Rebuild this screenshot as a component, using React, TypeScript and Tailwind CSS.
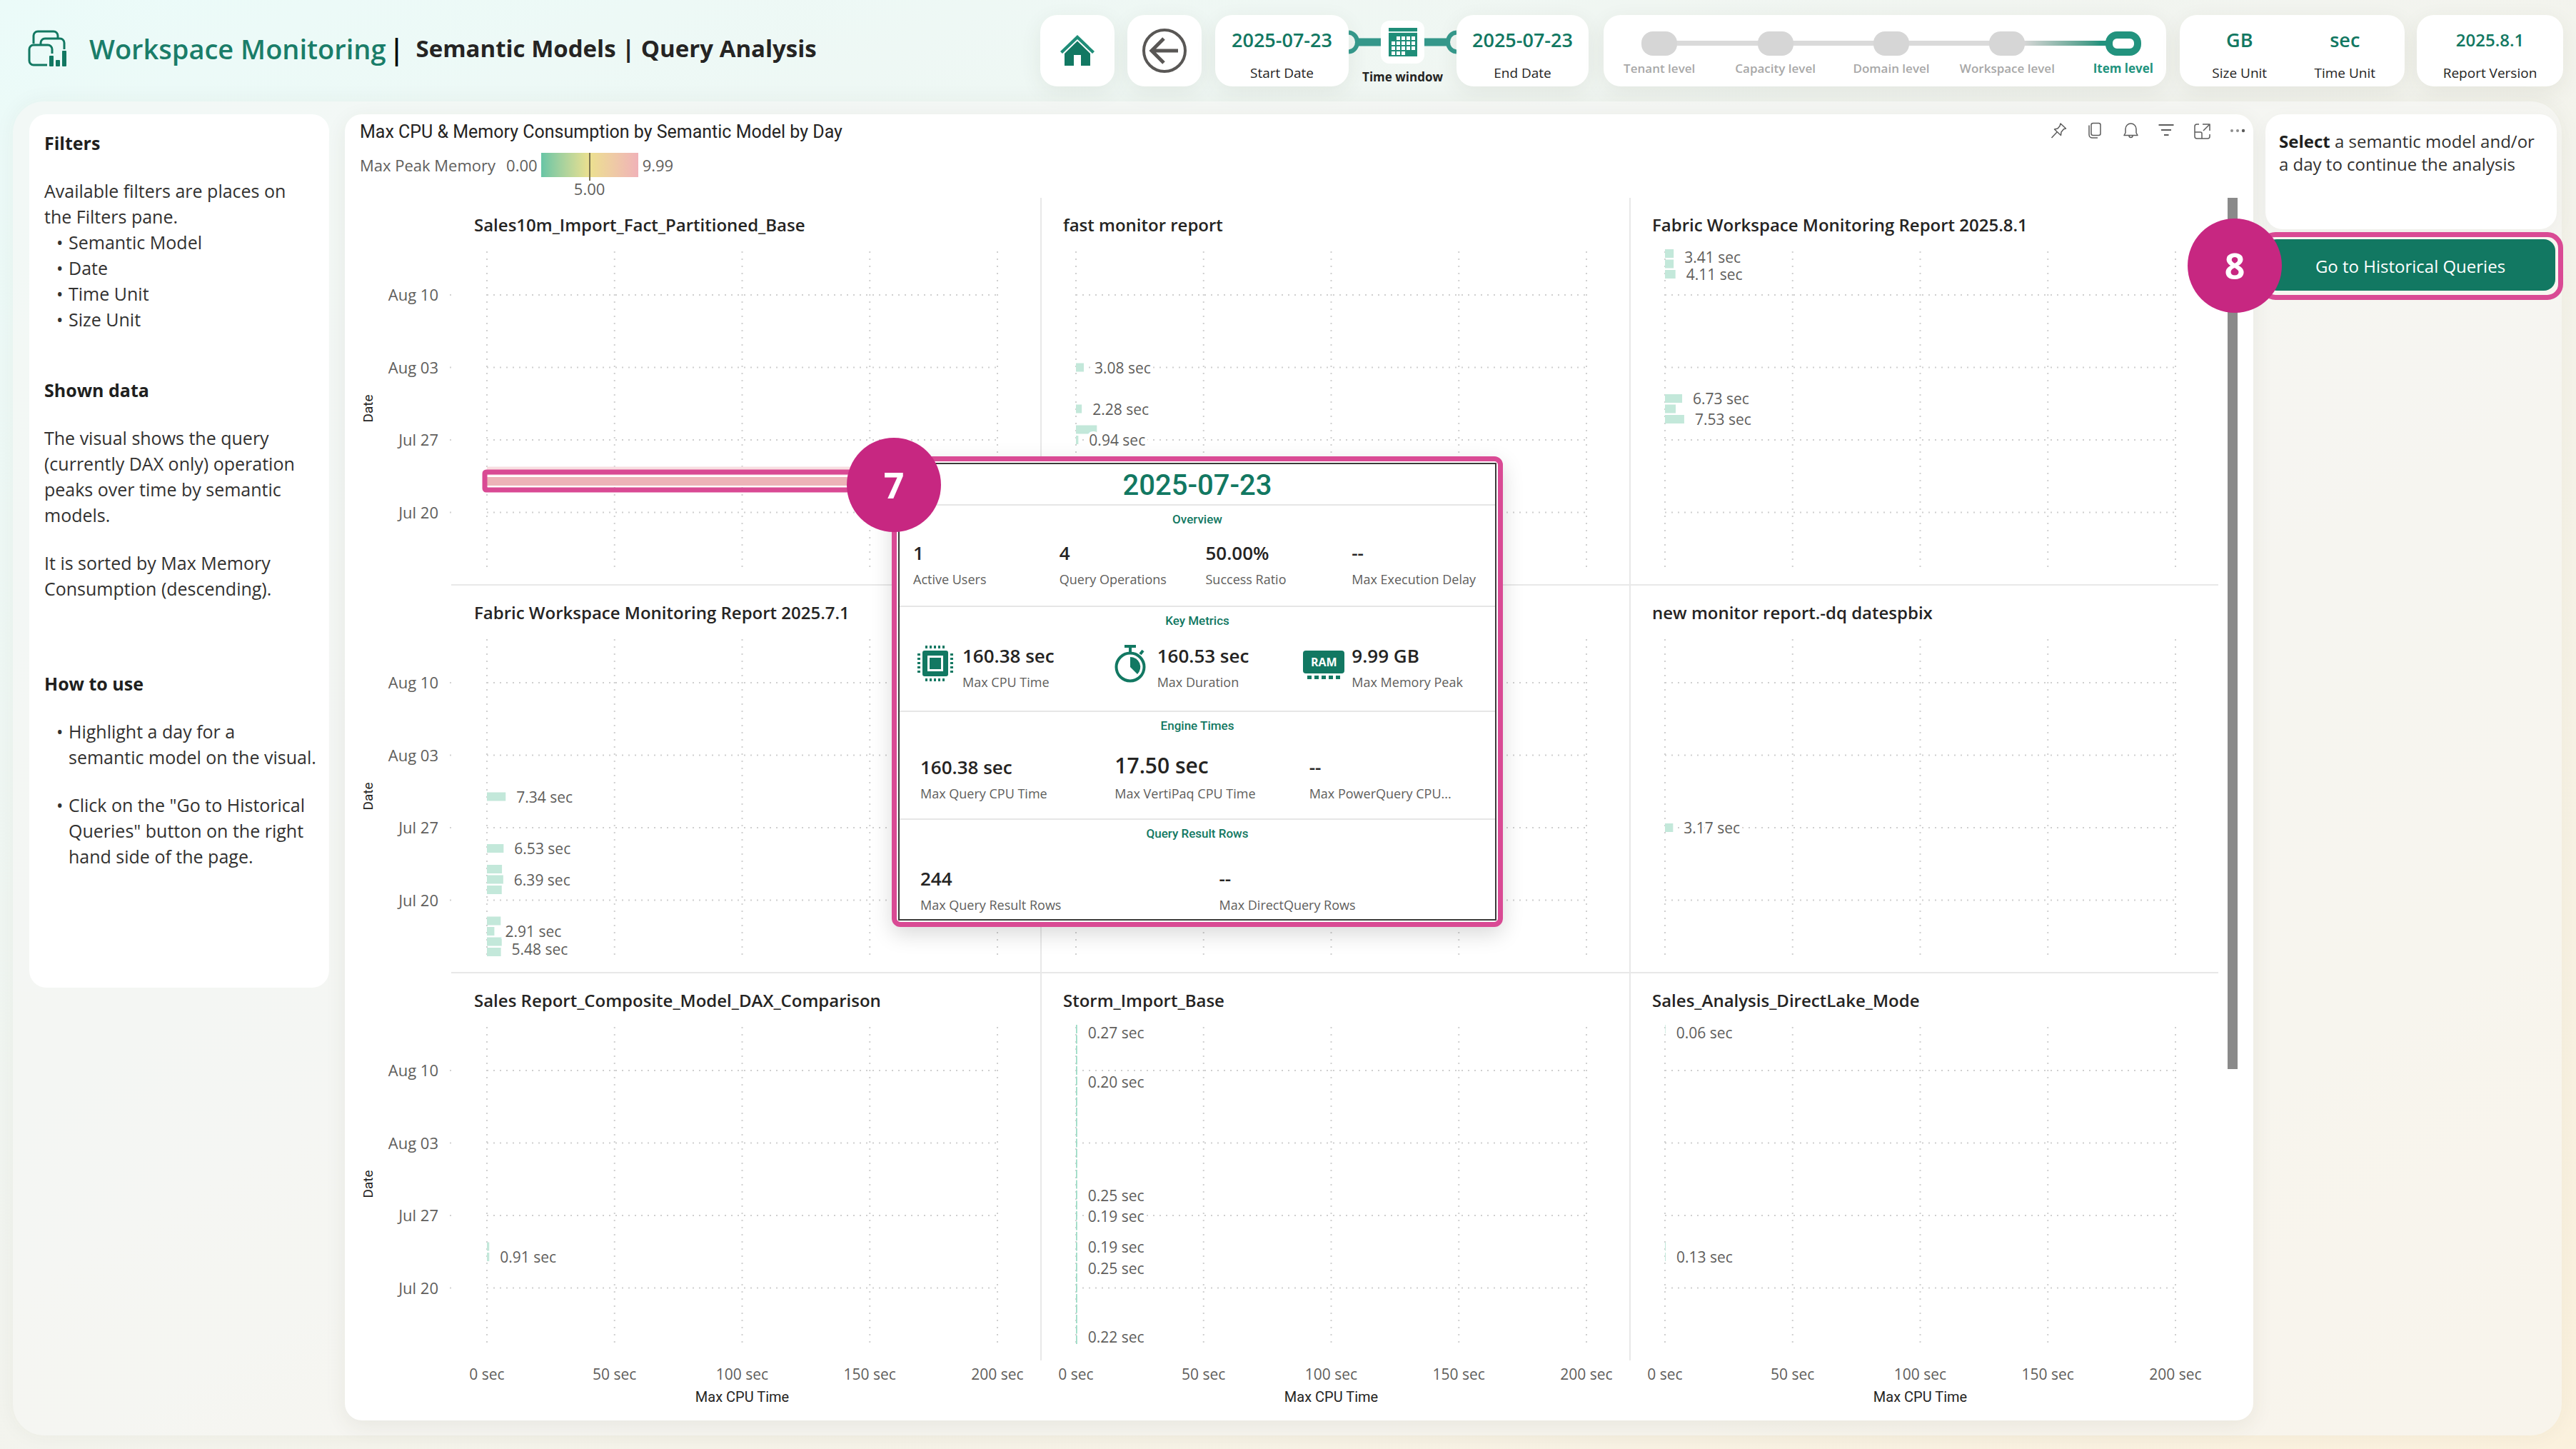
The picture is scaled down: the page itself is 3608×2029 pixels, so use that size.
import type { ReactNode } from "react";

const TEAL = "#127862";

/* ---------- icons ---------- */

function LogoIcon() {
  return (
    <svg className="h-[56px] w-[58px]" viewBox="0 0 58 56" fill="none" stroke={TEAL} strokeWidth="3" aria-hidden="true">
      <path d="M8 20V9a6 6 0 0 1 6-6h22a6 6 0 0 1 6 6v4" />
      <path d="M18 21v-2a6 6 0 0 1 6-6h21a6 6 0 0 1 6 6v9" />
      <path d="M27 50H8a6 6 0 0 1-6-6V28a6 6 0 0 1 6-6h20a6 6 0 0 1 6 6v6" />
      <g fill={TEAL} stroke="none">
        <rect x="30" y="37" width="6" height="15" rx="1" />
        <rect x="39" y="43" width="6" height="9" rx="1" />
        <rect x="48" y="30" width="6" height="22" rx="1" />
      </g>
    </svg>
  );
}

function HomeIcon() {
  return (
    <svg className="h-[44px] w-[50px]" viewBox="0 0 50 44" aria-hidden="true">
      <path d="M25 0 L1 23 L4 26 L25 6 L46 26 L49 23 Z" fill="#1f8d78" />
      <path d="M25 8.500 L7 26 V43 H20 V28 H30 V43 H43 V26 Z" fill={TEAL} />
    </svg>
  );
}

function BackIcon() {
  return (
    <svg className="h-[64px] w-[64px]" viewBox="0 0 64 64" fill="none" stroke="#595755" strokeWidth="4" aria-hidden="true">
      <circle cx="32" cy="32" r="29" />
      <path d="M51 32H15M31 15L14 32l17 17" strokeWidth="5" />
    </svg>
  );
}

function CalendarIcon() {
  const cells: ReactNode[] = [];
  for (let r = 0; r < 4; r++) {
    for (let c = 0; c < 5; c++) {
      if ((r === 0 && c === 0) || (r === 3 && c > 2)) continue;
      cells.push(<rect key={`${r}-${c}`} x={4 + c * 7} y={12 + r * 7} width="5" height="5" fill="#fff" />);
    }
  }
  return (
    <svg className="h-[40px] w-[40px]" viewBox="0 0 40 40" aria-hidden="true">
      <rect width="40" height="40" fill="#1f8d78" />
      <path d="M0 6h40" stroke="#e7f4f1" strokeWidth="2" />
      {cells}
    </svg>
  );
}

function CpuIcon() {
  return (
    <svg className="h-[50px] w-[50px]" viewBox="0 0 50 50" fill={TEAL} aria-hidden="true">
      <rect x="7" y="7" width="36" height="36" rx="3" />
      <rect x="14" y="14" width="22" height="22" fill="#fff" />
      <rect x="17" y="17" width="16" height="16" />
      <g stroke={TEAL} strokeWidth="4" strokeDasharray="3 3">
        <path d="M11 2h30M11 48h30M2 11v30M48 11v30" />
      </g>
    </svg>
  );
}

function StopwatchIcon() {
  return (
    <svg className="h-[54px] w-[46px]" viewBox="0 0 46 54" fill="none" stroke={TEAL} strokeWidth="4" aria-hidden="true">
      <circle cx="23" cy="32" r="19.500" />
      <path d="M15 3h16M23 3v9M37 14l4-5" />
      <path d="M23 18a14 14 0 0 1 10 24L23 32z" fill={TEAL} stroke="none" />
    </svg>
  );
}

function RamIcon() {
  return (
    <div className="flex w-[58px] flex-col items-center" aria-hidden="true">
      <div className="flex h-8 w-full items-center justify-center rounded bg-[#127862] text-[16px] font-bold text-white">RAM</div>
      <svg className="mt-[3px] h-[5px] w-[46px]" viewBox="0 0 46 5">
        <path d="M0 2.500h46" stroke={TEAL} strokeWidth="5" strokeDasharray="6 4" />
      </svg>
    </div>
  );
}

const toolIcons: { name: string; art: ReactNode }[] = [
  { name: "Pin visual", art: <path d="M14 2l7.500 7-3 .8-3.500 4.200-.5 4.500L5.500 10l4.500-1 3-3.500zM9 14l-7.500 8" /> },
  {
    name: "Copy visual",
    art: (
      <>
        <rect x="7" y="1.500" width="13" height="17" rx="2.500" />
        <path d="M4 4.500v13a4.500 4.500 0 0 0 4.500 4.500H16" />
      </>
    ),
  },
  {
    name: "Set alert",
    art: (
      <>
        <path d="M3 18.500h19l-2-3.500V9.500a7.500 7.500 0 0 0-15 0V15z" />
        <path d="M10 19a2.500 2.500 0 0 0 5 0" />
      </>
    ),
  },
  { name: "Filters on visual", art: <path d="M1.500 4h21M5 11h14M9 18h6.500" strokeWidth="2" /> },
  {
    name: "Focus mode",
    art: (
      <>
        <path d="M8 3H5a3 3 0 0 0-3 3v14a3 3 0 0 0 3 3h15a3 3 0 0 0 3-3v-3M13 3h10v9M22 4l-8 8" />
        <path d="M2 14h8a2 2 0 0 1 2 2v7" />
      </>
    ),
  },
  {
    name: "More options",
    art: (
      <g fill="#5c5c5c" stroke="none">
        <circle cx="4" cy="12" r="2" opacity=".7" />
        <circle cx="12" cy="12" r="2" opacity=".7" />
        <circle cx="20" cy="12" r="2.200" />
      </g>
    ),
  },
];

/* ---------- header ---------- */

const cardClass = "rounded-3xl bg-white shadow-[0_8px_30px_rgba(60,60,40,0.08)]";

function HeaderStat({ value, label, size }: { value: string; label: string; size: string }) {
  return (
    <div className="flex flex-1 flex-col items-center">
      <span className={`${size} mt-[15px] h-10 leading-10 font-semibold text-[#127862]`}>{value}</span>
      <span className="mt-3 text-[19px] leading-7 text-[#252423]">{label}</span>
    </div>
  );
}

function Connector({ flip }: { flip?: boolean }) {
  return (
    <svg className={flip ? "h-[40px] w-[45px] -scale-x-100" : "h-[40px] w-[45px]"} viewBox="0 0 45 40" fill="none" stroke="#35978a" aria-hidden="true">
      <path d="M0 6.500C8 7 12 14 12 20S8 33 0 33.500" strokeWidth="6" />
      <path d="M13 20h32" strokeWidth="11" />
    </svg>
  );
}

const levels = ["Tenant level", "Capacity level", "Domain level", "Workspace level", "Item level"];

function Levels() {
  return (
    <nav className={`${cardClass} h-[100px] w-[788px]`} aria-label="Levels">
      <ol className="-mr-[21px] -ml-[3px] grid grid-cols-5 pt-[23px]">
        {levels.map((name, i) => {
          const active = i === levels.length - 1;
          return (
            <li key={name} className="relative flex flex-col items-center">
              {i < 3 && <div className="absolute top-[13px] left-1/2 h-[7px] w-full bg-[#dadada]" />}
              {i === 3 && <div className="absolute top-[13px] left-1/2 z-10 h-[7px] w-full bg-linear-to-r from-[#d6d6d6] from-15% to-[#22937e] to-80%" />}
              {active ? (
                <div className="z-20 h-[34px] w-[50px] rounded-2xl border-[10px] border-[#22937e] bg-white" />
              ) : (
                <div className="z-0 h-[34px] w-[50px] rounded-2xl bg-[#d6d6d6]" />
              )}
              <span className={active ? "mt-1 text-[17px] leading-7 font-bold whitespace-nowrap text-[#22937e]" : "mt-1 text-[17px] leading-7 font-semibold whitespace-nowrap text-[#a8a8a8]"}>
                {name}
              </span>
            </li>
          );
        })}
      </ol>
    </nav>
  );
}

function Header() {
  return (
    <header className="flex h-[142px] items-start pt-[21px] pr-[18px] pl-[39px]">
      <div className="flex items-start pt-[17px]">
        <div className="pt-[3px]">
          <LogoIcon />
        </div>
        <h1 className="ml-[28px] text-[38px] leading-[60px] font-semibold whitespace-nowrap text-[#1a7d69]">Workspace Monitoring</h1>
        <span className="ml-1 text-[40px] leading-[60px] font-semibold text-black">|</span>
        <h2 className="ml-4 text-[33px] leading-[60px] font-bold whitespace-nowrap text-[#252423]">Semantic Models | Query Analysis</h2>
      </div>
      <div className="ml-auto flex items-start">
        <button aria-label="Home" className={`${cardClass} flex h-[100px] w-[104px] items-center justify-center`}>
          <HomeIcon />
        </button>
        <button aria-label="Back" className={`${cardClass} ml-[18px] flex h-[100px] w-[104px] items-center justify-center`}>
          <BackIcon />
        </button>
        <div className={`${cardClass} ml-[19px] flex h-[100px] w-[187px]`}>
          <HeaderStat value="2025-07-23" label="Start Date" size="text-[27px]" />
        </div>
        <div className="flex w-[151px] flex-col items-center pt-2">
          <div className="flex items-center">
            <Connector />
            <div className="flex h-[60px] w-[61px] items-center justify-center rounded-xl bg-white">
              <CalendarIcon />
            </div>
            <Connector flip />
          </div>
          <span className="mt-[5px] text-[17px] leading-7 font-bold whitespace-nowrap text-[#252423]">Time window</span>
        </div>
        <div className={`${cardClass} flex h-[100px] w-[185px]`}>
          <HeaderStat value="2025-07-23" label="End Date" size="text-[27px]" />
        </div>
        <div className="ml-[21px]">
          <Levels />
        </div>
        <div className={`${cardClass} ml-[19px] flex h-[100px] w-[315px] px-[10px]`}>
          <HeaderStat value="GB" label="Size Unit" size="text-[27px]" />
          <HeaderStat value="sec" label="Time Unit" size="text-[27px]" />
        </div>
        <div className={`${cardClass} ml-[17px] flex h-[100px] w-[205px]`}>
          <HeaderStat value="2025.8.1" label="Report Version" size="text-[24px]" />
        </div>
      </div>
    </header>
  );
}

/* ---------- side columns ---------- */

function Bullets({ items, gap }: { items: string[]; gap?: boolean }) {
  return (
    <ul className={gap ? "mt-[31px] flex flex-col gap-[31px]" : "flex flex-col"}>
      {items.map((t) => (
        <li key={t} className="flex pl-[17px]">
          <span className="w-[17px] shrink-0">•</span>
          <span className="whitespace-pre">{t}</span>
        </li>
      ))}
    </ul>
  );
}

function Sidebar() {
  return (
    <aside className="h-[1223px] w-[420px] shrink-0 rounded-3xl bg-white pt-[22px] pr-3 pl-[21px] text-[25px] leading-9 text-[#323130]">
      <h3 className="font-bold text-[#201f1e]">Filters</h3>
      <p className="mt-[31px]">
        Available filters are places on
        <br />
        the Filters pane.
      </p>
      <Bullets items={["Semantic Model", "Date", "Time Unit", "Size Unit"]} />
      <h3 className="mt-[63px] font-bold text-[#201f1e]">Shown data</h3>
      <p className="mt-[31px]">
        The visual shows the query
        <br />
        (currently DAX only) operation
        <br />
        peaks over time by semantic
        <br />
        models.
      </p>
      <p className="mt-[31px]">
        It is sorted by Max Memory
        <br />
        Consumption (descending).
      </p>
      <h3 className="mt-[97px] font-bold text-[#201f1e]">How to use</h3>
      <Bullets
        gap
        items={["Highlight a day for a\nsemantic model on the visual.", 'Click on the "Go to Historical\nQueries" button on the right\nhand side of the page.']}
      />
    </aside>
  );
}

function Badge({ children, place }: { children: ReactNode; place: string }) {
  return (
    <div className={`${place} absolute z-30 flex h-[132px] w-[132px] items-center justify-center rounded-full bg-[#c72781] text-[50px] font-bold text-white`}>
      {children}
    </div>
  );
}

function ActionColumn() {
  return (
    <aside className="w-[408px] shrink-0">
      <p className="h-[161px] rounded-3xl bg-white pt-[22px] pl-[19px] text-[24px] leading-8 text-[#323130] shadow-[0_8px_30px_rgba(60,60,40,0.04)]">
        <b className="text-[#201f1e]">Select</b> a semantic model and/or
        <br />a day to continue the analysis
      </p>
      <div className="relative mt-[14px]">
        <div className="absolute -top-[10px] -right-[9px] -bottom-[13px] -left-2 rounded-[22px] border-[7px] border-[#d94a94] bg-[#f7f6f0]" />
        <button className="relative h-[72px] w-[406px] rounded-2xl bg-[#127862] pt-1 text-[24px] text-white">Go to Historical Queries</button>
        <Badge place="-left-[109px] -top-[29px]">8</Badge>
      </div>
    </aside>
  );
}

/* ---------- small multiples ---------- */

type Bar = { day: number; sec: number; label?: string; labelY?: number; fill?: string };
type FacetData = { title: string; bars: Bar[]; highlight?: boolean };

/* Days count from Jul 27, which sits 265px below the top of a plot. */
const dayY = (day: number) => 265 - day * 14.5;
const ticks = [
  { day: 14, text: "Aug 10" },
  { day: 7, text: "Aug 03" },
  { day: 0, text: "Jul 27" },
  { day: -7, text: "Jul 20" },
];

const stormLabels: Record<number, [string, number]> = {
  17: ["0.27 sec", 9],
  13: ["0.20 sec", 78],
  2: ["0.25 sec", 237],
  0: ["0.19 sec", 266],
  [-3]: ["0.19 sec", 309],
  [-5]: ["0.25 sec", 339],
  [-12]: ["0.22 sec", 435],
};
const stormBars: Bar[] = Array.from({ length: 31 }, (_, i) => {
  const day = 18 - i;
  const l = stormLabels[day];
  return { day, sec: 0.5, label: l?.[0], labelY: l?.[1], fill: "#9ddcc6" };
});

const facets: FacetData[] = [
  {
    title: "Sales10m_Import_Fact_Partitioned_Base",
    highlight: true,
    bars: [
      { day: -3, sec: 158, fill: "#f8dfe1" },
      { day: -4, sec: 160.38, fill: "#edb3b8" },
    ],
  },
  {
    title: "fast monitor report",
    bars: [
      { day: 7, sec: 3.08, label: "3.08 sec" },
      { day: 3, sec: 2.28, label: "2.28 sec" },
      { day: 1, sec: 8.2 },
      { day: 0, sec: 0.94, label: "0.94 sec" },
    ],
  },
  {
    title: "Fabric Workspace Monitoring Report 2025.8.1",
    bars: [
      { day: 18, sec: 3.41, label: "3.41 sec", labelY: 9 },
      { day: 17, sec: 3.4 },
      { day: 16, sec: 4.11, label: "4.11 sec" },
      { day: 4, sec: 6.73, label: "6.73 sec" },
      { day: 3, sec: 4.2 },
      { day: 2, sec: 7.53, label: "7.53 sec" },
    ],
  },
  {
    title: "Fabric Workspace Monitoring Report 2025.7.1",
    bars: [
      { day: 3, sec: 7.34, label: "7.34 sec" },
      { day: -2, sec: 6.53, label: "6.53 sec" },
      { day: -4, sec: 5.9 },
      { day: -5, sec: 6.39, label: "6.39 sec" },
      { day: -6, sec: 5.8 },
      { day: -9, sec: 5.4 },
      { day: -10, sec: 2.91, label: "2.91 sec" },
      { day: -11, sec: 5.8 },
      { day: -12, sec: 5.48, label: "5.48 sec", labelY: 435 },
    ],
  },
  { title: "", bars: [] },
  { title: "new monitor report.-dq datespbix", bars: [{ day: 0, sec: 3.17, label: "3.17 sec" }] },
  {
    title: "Sales Report_Composite_Model_DAX_Comparison",
    bars: [
      { day: -3, sec: 0.9 },
      { day: -4, sec: 0.91, label: "0.91 sec" },
    ],
  },
  { title: "Storm_Import_Base", bars: stormBars },
  {
    title: "Sales_Analysis_DirectLake_Mode",
    bars: [
      { day: 18, sec: 0.2, label: "0.06 sec", labelY: 9 },
      { day: -3, sec: 0.3 },
      { day: -4, sec: 0.3, label: "0.13 sec" },
    ],
  },
];

function Facet({ data, divider, last }: { data: FacetData; divider: boolean; last: boolean }) {
  return (
    <section
      className={`flex flex-col pt-[22px] ${divider ? "border-l-2 border-[#e8e8e8] pl-[30px]" : "pl-8"} ${last ? "h-[542px]" : "h-[543px] border-b-2 border-b-[#e8e8e8]"}`}
    >
      <h4 className="h-8 text-[24px] leading-8 font-semibold whitespace-nowrap text-[#252423]">{data.title}</h4>
      <div className="mt-5 pr-[60px] pl-[18px]">
        <svg className="h-[444px] w-full overflow-visible">
          <g stroke="#cfcfcf" strokeWidth="2" strokeDasharray="2 7">
            {[0, 25, 50, 75, 100].map((p) => (
              <line key={p} x1={`${p}%`} x2={`${p}%`} y1="1" y2="444" strokeDasharray="2 8" />
            ))}
            {ticks.map((t) => (
              <line key={t.day} x1="0" x2="100%" y1={dayY(t.day)} y2={dayY(t.day)} />
            ))}
          </g>
          {data.bars.map((b) => (
            <rect key={b.day} x="0" y={dayY(b.day) - 6} height="12" width={`${b.sec / 2}%`} fill={b.fill ?? "#c3e8da"} />
          ))}
          {data.bars
            .filter((b) => b.label)
            .map((b) => (
              <text
                key={b.day}
                x={`${b.sec / 2}%`}
                y={b.labelY ?? dayY(b.day)}
                dx="15"
                dy="8"
                className="fill-[#605e5c] text-[21px]"
                stroke="#fff"
                strokeWidth="8"
                paintOrder="stroke"
              >
                {b.label}
              </text>
            ))}
          {data.highlight && <rect x="-3" y={dayY(-4) - 13} width="81%" height="25" rx="2" fill="none" stroke="#d94a94" strokeWidth="7" />}
        </svg>
      </div>
    </section>
  );
}

function DateAxis() {
  return (
    <svg className="h-[543px] w-full" aria-label="Date axis">
      {ticks.map((t) => (
        <g key={t.day}>
          <text x="110" y={dayY(t.day) + 74 + 8} textAnchor="end" className="fill-[#605e5c] text-[22px]">
            {t.text}
          </text>
          <rect x="126" y={dayY(t.day) + 73} width="2" height="2" fill="#d2d2d2" />
        </g>
      ))}
      <text transform="translate(18 295) rotate(-90)" textAnchor="middle" className="fill-[#252423] font-[Roboto] text-[19px]">
        Date
      </text>
    </svg>
  );
}

function CpuAxis() {
  return (
    <div className="pt-[7px] pr-[60px] pl-[50px]">
      <svg className="h-[63px] w-full overflow-visible" aria-label="Max CPU Time axis">
        {[0, 50, 100, 150, 200].map((v) => (
          <text key={v} x={`${v / 2}%`} y="20" textAnchor="middle" className="fill-[#605e5c] text-[21px]">
            {v} sec
          </text>
        ))}
        <text x="50%" y="51" textAnchor="middle" className="fill-[#252423] font-[Roboto] text-[20px]">
          Max CPU Time
        </text>
      </svg>
    </div>
  );
}

/* ---------- tooltip ---------- */

function Metric({ value, label, large }: { value: string; label: string; large?: boolean }) {
  return (
    <div className="whitespace-nowrap">
      <div className={large ? "h-[34px] text-[30px] leading-[30px] font-semibold text-[#252423]" : "h-[34px] text-[26px] leading-[34px] font-semibold text-[#252423]"}>{value}</div>
      <div className="mt-2 text-[18px] leading-6 text-[#605e5c]">{label}</div>
    </div>
  );
}

function TipSection({ title, size, children }: { title: string; size: string; children: ReactNode }) {
  return (
    <section className={`${size} border-t-2 border-[#e6e6e6] pt-[7px]`}>
      <h5 className="text-center font-[Roboto] text-[17px] leading-6 font-medium text-[#127862]">{title}</h5>
      {children}
    </section>
  );
}

function DayTooltip() {
  return (
    <div role="tooltip" className="absolute top-[479px] left-[766px] z-20 w-[856px] rounded-xl border-[7px] border-[#d94a94] bg-white p-[2px] shadow-[0_10px_30px_rgba(0,0,0,0.15)]">
      <div className="border-2 border-[#3b3a39] bg-white">
        <div className="h-[56px] text-center font-[Roboto] text-[40px] leading-[60px] font-medium text-[#127862]">2025-07-23</div>
        <TipSection title="Overview" size="h-[142px]">
          <div className="mt-[18px] -mr-1 grid grid-cols-4 pl-[19px]">
            <Metric value="1" label="Active Users" />
            <Metric value="4" label="Query Operations" />
            <Metric value="50.00%" label="Success Ratio" />
            <Metric value="--" label="Max Execution Delay" />
          </div>
        </TipSection>
        <TipSection title="Key Metrics" size="h-[147px]">
          <div className="mt-5 grid grid-cols-3 pl-4">
            <div className="flex">
              <div className="w-[72px] shrink-0 pt-[3px] pl-[9px]">
                <CpuIcon />
              </div>
              <Metric value="160.38 sec" label="Max CPU Time" />
            </div>
            <div className="flex">
              <div className="w-[72px] shrink-0 pt-px pl-[11px]">
                <StopwatchIcon />
              </div>
              <Metric value="160.53 sec" label="Max Duration" />
            </div>
            <div className="flex">
              <div className="w-[72px] shrink-0 pt-[10px] pl-[4px]">
                <RamIcon />
              </div>
              <Metric value="9.99 GB" label="Max Memory Peak" />
            </div>
          </div>
        </TipSection>
        <TipSection title="Engine Times" size="h-[151px]">
          <div className="mt-[29px] -mr-3 grid grid-cols-3 pl-[29px]">
            <Metric value="160.38 sec" label="Max Query CPU Time" />
            <Metric value="17.50 sec" label="Max VertiPaq CPU Time" large />
            <Metric value="--" label="Max PowerQuery CPU..." />
          </div>
        </TipSection>
        <TipSection title="Query Result Rows" size="h-[141px]">
          <div className="mt-[34px] -mr-8 grid grid-cols-2 pl-[29px]">
            <Metric value="244" label="Max Query Result Rows" />
            <Metric value="--" label="Max DirectQuery Rows" />
          </div>
        </TipSection>
      </div>
      <Badge place="-left-[70px] -top-[33px]">7</Badge>
    </div>
  );
}

function ChartCard() {
  return (
    <main className="relative ml-[22px] min-w-0 flex-1 rounded-3xl bg-white pt-[9px] pl-[21px] shadow-[0_8px_30px_rgba(60,60,40,0.08)]">
      <div className="flex h-8 items-start justify-between pr-[10px]">
        <h2 className="font-[Roboto] text-[25px] leading-8 text-[#252423]">Max CPU &amp; Memory Consumption by Semantic Model by Day</h2>
        <div className="flex gap-[26px] pt-[2px]">
          {toolIcons.map((t) => (
            <button key={t.name} aria-label={t.name}>
              <svg className="h-6 w-6" viewBox="0 0 24 24" fill="none" stroke="#5c5c5c" strokeWidth="1.500" strokeLinejoin="round">
                {t.art}
              </svg>
            </button>
          ))}
        </div>
      </div>
      <div className="mt-[13px] flex h-[63px] items-start text-[22px] leading-[34px] text-[#605e5c]">
        <span>Max Peak Memory</span>
        <span className="ml-[15px]">0.00</span>
        <div className="ml-[5px] flex w-[136px] flex-col items-center">
          <div className="relative flex h-[34px] w-full justify-center bg-linear-to-r from-[#66c5a5] via-[#ece08f] to-[#f0b2b8]">
            <div className="absolute h-[39px] w-[2px] bg-[#7b7452]" />
          </div>
          <span className="mt-[4px] leading-6">5.00</span>
        </div>
        <span className="ml-[6px]">9.99</span>
      </div>
      <div className="flex pb-[14px]">
        <div className="w-[128px] shrink-0">
          <DateAxis />
          <DateAxis />
          <DateAxis />
        </div>
        <div className="min-w-0 flex-1">
          <div className="grid grid-cols-3">
            {facets.map((f, i) => (
              <Facet key={i} data={f} divider={i % 3 > 0} last={i > 5} />
            ))}
          </div>
          <div className="grid grid-cols-3">
            <CpuAxis />
            <CpuAxis />
            <CpuAxis />
          </div>
        </div>
        <div className="w-[49px] shrink-0 pl-[13px]">
          <div className="h-[1220px] w-[14px] bg-[#8a8a8a]" />
        </div>
      </div>
      <DayTooltip />
    </main>
  );
}

export default function App() {
  return (
    <div className="flex min-h-screen flex-col bg-linear-to-br from-[#ebfbf9] via-[#f2f4ef] via-45% to-[#fbf1dd] pb-[19px] font-['Open_Sans','Noto_Sans',sans-serif]">
      <Header />
      <div className="mr-[20px] ml-[18px] flex flex-1 items-start rounded-[44px] bg-[#f7f7f5]/60 pt-[18px] pr-[7px] pb-5 pl-[23px] shadow-[0_0_30px_rgba(60,60,40,0.05)]">
        <Sidebar />
        <ChartCard />
        <div className="ml-[17px]">
          <ActionColumn />
        </div>
      </div>
    </div>
  );
}
